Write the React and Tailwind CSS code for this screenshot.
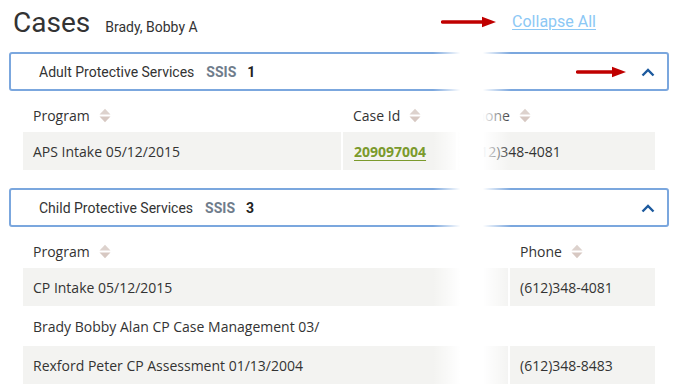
function SortIcon() {
  return (
    <svg width="12" height="15" viewBox="0 0 12 15" className="ml-[9px] shrink-0">
      <path d="M0.5 6.5 L6 0.8 L11.5 6.5 Z" fill="#ddd2cd" />
      <path d="M0.5 8.5 L6 14.2 L11.5 8.5 Z" fill="#d7c8c2" />
    </svg>
  );
}

function RedArrow({ width }) {
  return (
    <svg width={width} height="12" viewBox={`0 0 ${width} 12`} className="shrink-0">
      <line x1="1.6" y1="6" x2={width - 10} y2="6" stroke="#c00000" strokeWidth="3.4" strokeLinecap="round" />
      <path d={`M${width - 14} 0.8 L${width} 6 L${width - 14} 11.2 Z`} fill="#c00000" />
    </svg>
  );
}

function Chevron() {
  return (
    <svg width="14" height="9" viewBox="0 0 14 9" className="shrink-0">
      <path d="M1.5 7.5 L7 2 L12.5 7.5" fill="none" stroke="#1d5a9e" strokeWidth="2.4" />
    </svg>
  );
}

function Panel({ title, count, arrow }) {
  return (
    <div className="ml-[9px] mr-[10px] h-[39px] border-2 border-[#7ba7de] rounded-[3px] flex items-center pl-[28px] pr-[12px] pt-[1px] font-['Roboto',sans-serif] text-[14px]">
      <span className="text-[#333]">{title}</span>
      <span className="ml-[12px] font-bold text-[#6f7c8b]">SSIS</span>
      <span className="ml-[11px] font-bold text-[#222]">{count}</span>
      <div className="ml-auto flex items-center gap-[15px]">
        {arrow && <RedArrow width={50} />}
        <Chevron />
      </div>
    </div>
  );
}

function Head({ label }) {
  return (
    <div className="flex items-center px-[10px] pb-[2px]">
      <span>{label}</span>
      <SortIcon />
    </div>
  );
}

export default function App() {
  return (
    <div className="relative w-[679px] h-[388px] overflow-hidden bg-white text-[#333]">
      <div className="flex items-baseline h-[52px] pt-[9px] pl-[13px] pr-[83px] font-['Roboto',sans-serif]">
        <span className="text-[28px] leading-[28px] text-[#333]">Cases</span>
        <span className="ml-[15px] text-[14px] text-[#333]">Brady, Bobby A</span>
        <div className="ml-auto self-start mt-[3px] h-[20px] flex items-center gap-[16px]">
          <RedArrow width={55} />
          <a className="text-[16px] leading-[20px] text-[#8cc8f5] underline underline-offset-[2px]">Collapse All</a>
        </div>
      </div>

      <Panel title="Adult Protective Services" count="1" arrow />

      <div className="mt-[10px] ml-[23px] mr-[24px] font-['Open_Sans',sans-serif] text-[14px]">
        <div className="grid grid-cols-[318px_113px_1fr] gap-x-[2px] h-[30px] mb-[1px]">
          <Head label="Program" />
          <Head label="Case Id" />
          <Head label="Phone" />
        </div>
        <div className="grid grid-cols-[318px_113px_1fr] gap-x-[2px] h-[38px]">
          <div className="bg-[#f3f3f1] flex items-center px-[10px]">APS Intake 05/12/2015</div>
          <div className="bg-[#f3f3f1] flex items-center px-[11px]">
            <a className="font-bold text-[#7b9a2c] underline underline-offset-[3px]">209097004</a>
          </div>
          <div className="bg-[#f3f3f1] flex items-center px-[10px]">(612)348-4081</div>
        </div>
      </div>

      <div className="mt-[18px]">
        <Panel title="Child Protective Services" count="3" />
      </div>

      <div className="mt-[10px] ml-[23px] mr-[24px] font-['Open_Sans',sans-serif] text-[14px]">
        <div className="grid grid-cols-[485px_1fr] gap-x-[2px] h-[30px] mb-[1px]">
          <Head label="Program" />
          <Head label="Phone" />
        </div>
        <div className="flex flex-col gap-[1px]">
          <div className="grid grid-cols-[485px_1fr] gap-x-[2px] h-[38px]">
            <div className="bg-[#f3f3f1] flex items-center px-[10px]">CP Intake 05/12/2015</div>
            <div className="bg-[#f3f3f1] flex items-center px-[10px]">(612)348-4081</div>
          </div>
          <div className="grid grid-cols-[485px_1fr] gap-x-[2px] h-[38px]">
            <div className="bg-white flex items-center px-[10px]">Brady Bobby Alan CP Case Management 03/</div>
            <div className="bg-white flex items-center px-[10px]"></div>
          </div>
          <div className="grid grid-cols-[485px_1fr] gap-x-[2px] h-[38px]">
            <div className="bg-[#f3f3f1] flex items-center px-[10px]">Rexford Peter CP Assessment 01/13/2004</div>
            <div className="bg-[#f3f3f1] flex items-center px-[10px]">(612)348-8483</div>
          </div>
        </div>
      </div>

      <div className="absolute top-[46px] bottom-0 left-[433px] w-[78px] bg-[linear-gradient(to_right,rgba(255,255,255,0),#fff_35%,#fff_64%,rgba(255,255,255,0))]" />
    </div>
  );
}
